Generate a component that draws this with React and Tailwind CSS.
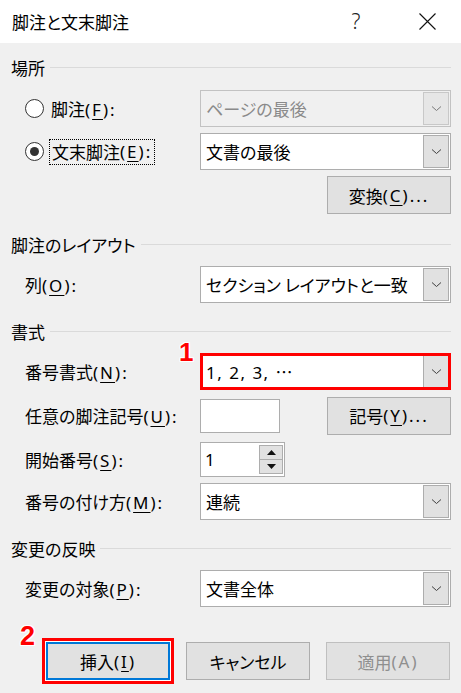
import React from "react";

const FONT = {
  fontFamily: '"Noto Sans CJK JP", "Noto Sans", sans-serif',
  fontFeatureSettings: '"palt"',
};

function L({ children }) {
  return (
    <span className="tracking-[2px]" style={{ fontFamily: '"Noto Sans", "Noto Sans CJK JP", sans-serif' }}>
      {children}
    </span>
  );
}

function U({ children }) {
  return <span className="underline underline-offset-[3px] decoration-1">{children}</span>;
}

function Chevron({ color = "#404040" }) {
  return (
    <svg width="11" height="7" viewBox="0 0 11 7">
      <path d="M1 1.5 L5.5 5.5 L10 1.5" fill="none" stroke={color} strokeWidth="1" />
    </svg>
  );
}

function Dropdown({ value, disabled }) {
  return (
    <div
      className={
        "flex h-[37px] w-[251px] items-stretch border p-px " +
        (disabled ? "border-[#c2c2c2] bg-[#f0f0f0]" : "border-[#adadad] bg-white")
      }
    >
      <div
        className={
          "flex flex-1 items-center pl-[4px] text-[17px] leading-none " +
          (disabled ? "text-[#8a8a8a]" : "text-black")
        }
      >
        {value}
      </div>
      <div
        className={
          "flex w-[26px] items-center justify-center border " +
          (disabled ? "border-[#c8c8c8] bg-[#e6e6e6]" : "border-[#adadad] bg-[#e1e1e1]")
        }
      >
        <Chevron color={disabled ? "#7a7a7a" : "#404040"} />
      </div>
    </div>
  );
}

function Heading({ text, className }) {
  return (
    <div className={"flex h-[20px] items-center " + className}>
      <span className="text-[17px] leading-none text-black">{text}</span>
      <div className="ml-[5px] h-px flex-1 bg-[#dadada]" />
    </div>
  );
}

function Btn({ children, className = "", disabled }) {
  return (
    <div
      className={
        "flex h-[38px] w-[124px] items-center justify-center border text-[17px] leading-none " +
        (disabled
          ? "border-[#bfbfbf] bg-[#e1e1e1] text-[#8f8f8f] "
          : "border-[#adadad] bg-[#e1e1e1] text-black ") +
        className
      }
    >
      {children}
    </div>
  );
}

function Radio({ checked }) {
  return (
    <div className="flex h-[19px] w-[19px] items-center justify-center rounded-full border border-[#333333] bg-white">
      {checked && <div className="h-[9px] w-[9px] rounded-full bg-[#333333]" />}
    </div>
  );
}

const redNum =
  "absolute font-bold leading-none text-[#ff0000] [text-shadow:1px_1px_0_#fff,-1px_-1px_0_#fff,1px_-1px_0_#fff,-1px_1px_0_#fff,0_1px_0_#fff,0_-1px_0_#fff,1px_0_0_#fff,-1px_0_0_#fff]";

export default function App() {
  return (
    <div className="h-[693px] w-[461px] overflow-hidden bg-[#f0f0f0]" style={FONT}>
      {/* title bar */}
      <div className="flex h-[43px] items-center bg-white pl-[12px]">
        <span className="flex-1 text-[17px] leading-none text-black">脚注と文末脚注</span>
        <span
          className="w-[12px] text-center text-[21px] font-light leading-none text-[#222]"
          style={{ fontFamily: '"Noto Sans", sans-serif' }}
        >
          ?
        </span>
        <div className="ml-[56px] mr-[25px] flex h-[18px] w-[18px] items-center justify-center">
          <svg width="17" height="17" viewBox="0 0 17 17">
            <path d="M0.5 0.5 L16.5 16.5 M16.5 0.5 L0.5 16.5" stroke="#111" strokeWidth="1.1" />
          </svg>
        </div>
      </div>

      <div className="flex flex-col pl-[11px] pr-[10px]">
        <Heading text="場所" className="mt-[14px]" />

        <div className="mt-[13px] flex h-[37px] items-center pl-[14px]">
          <div className="flex w-[175px] items-center">
            <Radio />
            <span className="ml-[7px] text-[17px] leading-none text-black">
              脚注<L>(<U>F</U>):</L>
            </span>
          </div>
          <Dropdown value="ページの最後" disabled />
        </div>

        <div className="mt-[6px] flex h-[37px] items-center pl-[14px]">
          <div className="flex w-[175px] items-center">
            <Radio checked />
            <span className="ml-[5px] flex h-[26px] items-center border border-dotted border-black px-[2px] text-[17px] leading-none text-black">
              文末脚注<L>(<U>E</U>):</L>
            </span>
          </div>
          <Dropdown value="文書の最後" />
        </div>

        <div className="mt-[6px] flex justify-end">
          <Btn>
            変換<L>(<U>C</U>)...</L>
          </Btn>
        </div>

        <Heading text="脚注のレイアウト" className="mt-[20px]" />

        <div className="mt-[12px] flex h-[37px] items-center pl-[14px]">
          <span className="w-[175px] text-[17px] leading-none text-black">
            列<L>(<U>O</U>):</L>
          </span>
          <Dropdown value="セクション レイアウトと一致" />
        </div>

        <Heading text="書式" className="mt-[18px]" />

        <div className="mt-[12px] flex h-[37px] items-center pl-[14px]">
          <span className="w-[175px] text-[17px] leading-none text-black">
            番号書式<L>(<U>N</U>):</L>
          </span>
          <div className="relative">
            <Dropdown
              value={
                <span className="tracking-[1.5px]" style={{ fontFamily: '"Noto Sans", sans-serif' }}>
                  1, 2, 3,{" "}
                  <span style={{ fontFamily: '"Noto Sans CJK JP", sans-serif' }}>…</span>
                </span>
              }
            />
            <div className="absolute inset-0 border-[3px] border-[#ff0000]" />
            <span className={redNum + " left-[-21px] top-[-14px] text-[26px]"} style={{ fontFamily: '"Liberation Sans", Arial, sans-serif' }}>
              1
            </span>
          </div>
        </div>

        <div className="mt-[7px] flex h-[37px] items-center pl-[14px]">
          <span className="w-[175px] text-[17px] leading-none text-black">
            任意の脚注記号<L>(<U>U</U>):</L>
          </span>
          <div className="h-[34px] w-[80px] border border-[#adadad] bg-white" />
          <div className="flex-1" />
          <Btn>
            記号<L>(<U>Y</U>)...</L>
          </Btn>
        </div>

        <div className="mt-[8px] flex h-[35px] items-center pl-[14px]">
          <span className="w-[175px] text-[17px] leading-none text-black">
            開始番号<L>(<U>S</U>):</L>
          </span>
          <div className="flex h-[35px] w-[85px] items-stretch border border-[#adadad] bg-white py-[2px] pr-px">
            <div className="flex flex-1 items-center pl-[4px] text-[17px] leading-none text-black" style={{ fontFamily: '"Noto Sans", sans-serif' }}>1</div>
            <div className="flex w-[24px] flex-col">
              <div className="flex flex-1 items-center justify-center border border-[#adadad] bg-[#e1e1e1]">
                <svg width="9" height="5" viewBox="0 0 9 5">
                  <path d="M0 5 L4.5 0 L9 5 Z" fill="#111" />
                </svg>
              </div>
              <div className="flex flex-1 items-center justify-center border border-t-0 border-[#adadad] bg-[#e1e1e1]">
                <svg width="9" height="5" viewBox="0 0 9 5">
                  <path d="M0 0 L4.5 5 L9 0 Z" fill="#111" />
                </svg>
              </div>
            </div>
          </div>
        </div>

        <div className="mt-[6px] flex h-[37px] items-center pl-[14px]">
          <span className="w-[175px] text-[17px] leading-none text-black">
            番号の付け方<L>(<U>M</U>):</L>
          </span>
          <Dropdown value="連続" />
        </div>

        <Heading text="変更の反映" className="mt-[18px]" />

        <div className="mt-[12px] flex h-[37px] items-center pl-[14px]">
          <span className="w-[175px] text-[17px] leading-none text-black">
            変更の対象<L>(<U>P</U>):</L>
          </span>
          <Dropdown value="文書全体" />
        </div>

        <div className="mt-[35px] flex justify-end gap-[16px] pr-px">
          <div className="relative">
            <Btn className="!border-2 !border-[#0078d7]">
              挿入<L>(<U>I</U>)</L>
            </Btn>
            <div className="absolute -inset-[4px] border-[3px] border-[#ff0000] shadow-[inset_0_0_0_1px_#fff]" />
            <span className={redNum + " left-[-26px] top-[-19px] text-[27px]"} style={{ fontFamily: '"Liberation Sans", Arial, sans-serif' }}>
              2
            </span>
          </div>
          <Btn>キャンセル</Btn>
          <Btn disabled>
            適用<L>(A)</L>
          </Btn>
        </div>
      </div>
    </div>
  );
}
